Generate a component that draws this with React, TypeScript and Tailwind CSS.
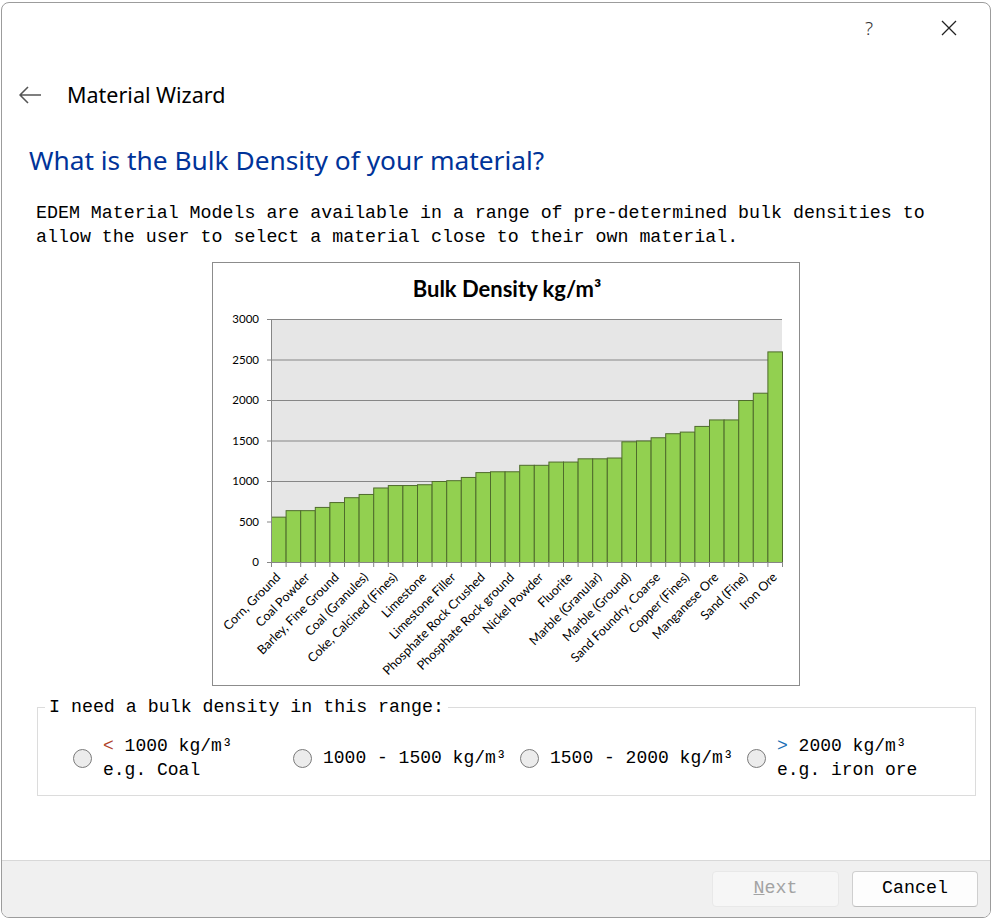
import React from "react";

const bars = [560, 640, 640, 680, 740, 800, 840, 920, 950, 950, 960, 1000, 1010, 1050, 1110, 1120, 1120, 1200, 1200, 1240, 1240, 1280, 1280, 1290, 1490, 1500, 1540, 1590, 1610, 1680, 1760, 1760, 2000, 2090, 2600];

const labels = [
  "Corn, Ground",
  "Coal Powder",
  "Barley, Fine Ground",
  "Coal (Granules)",
  "Coke, Calcined (Fines)",
  "Limestone",
  "Limestone Filler",
  "Phosphate Rock Crushed",
  "Phosphate Rock ground",
  "Nickel Powder",
  "Fluorite",
  "Marble (Granular)",
  "Marble (Ground)",
  "Sand Foundry, Coarse",
  "Copper (Fines)",
  "Manganese Ore",
  "Sand (Fine)",
  "Iron Ore",
];

const mono = { fontFamily: '"Liberation Mono", "DejaVu Sans Mono", monospace' };

function DensityChart() {
  const x0 = 58;
  const y0 = 299;
  const plotW = 511;
  const scale = 243 / 3000;
  const bw = plotW / bars.length;
  const ticks = [0, 500, 1000, 1500, 2000, 2500, 3000];

  return (
    <svg width={586} height={422} viewBox="0 0 586 422" className="block" style={{ fontFamily: 'Lato, "Open Sans", sans-serif' }}>
      <text x={294} y={34} textAnchor="middle" fontSize={22} fontWeight={700} fill="#000">
        Bulk Density kg/m³
      </text>
      <rect x={x0} y={56} width={plotW} height={243} fill="#e6e6e6" />
      {ticks.map((t) => {
        const y = y0 - t * scale;
        return (
          <g key={t}>
            <line x1={x0 - 4} x2={x0 + plotW} y1={y + 0.5} y2={y + 0.5} stroke="#868686" strokeWidth={1} />
            <text x={46} y={y + 4} textAnchor="end" fontSize={11.5} fill="#000">
              {t}
            </text>
          </g>
        );
      })}
      {bars.map((v, i) => (
        <rect
          key={i}
          x={x0 + i * bw + 0.5}
          y={y0 - v * scale + 0.5}
          width={bw}
          height={v * scale}
          fill="#92d050"
          stroke="#4f6b2c"
          strokeWidth={1}
        />
      ))}
      <line x1={x0 + 0.5} x2={x0 + 0.5} y1={56} y2={y0 + 1} stroke="#868686" />
      <line x1={x0} x2={x0 + plotW + 1} y1={y0 + 0.5} y2={y0 + 0.5} stroke="#868686" />
      {Array.from({ length: bars.length + 1 }).map((_, i) => (
        <line key={i} x1={x0 + i * bw + 0.5} x2={x0 + i * bw + 0.5} y1={y0} y2={y0 + 5} stroke="#868686" />
      ))}
      {labels.map((l, k) => {
        const cx = x0 + (k * 2 + 0.5) * bw;
        const ax = cx + 3;
        const ay = 315;
        return (
          <text key={l} x={ax} y={ay} textAnchor="end" fontSize={12.6} fill="#000" transform={`rotate(-45 ${ax} ${ay})`}>
            {l}
          </text>
        );
      })}
    </svg>
  );
}

function Radio({ children }: { children: React.ReactNode }) {
  return (
    <div className="flex items-center">
      <span className="block w-[19px] h-[19px] rounded-full border border-[#7a7a7a] bg-[#ececec] shrink-0" />
      <div className="ml-[11px] text-[18px] leading-[24px] text-black whitespace-pre" style={mono}>
        {children}
      </div>
    </div>
  );
}

export default function App() {
  return (
    <div className="w-[993px] h-[921px] bg-white overflow-hidden pt-[2px] pl-[1px]">
      <div className="w-[990px] h-[916px] border border-[#9c9c9c] rounded-[8px] overflow-hidden bg-white flex flex-col">
        {/* title bar */}
        <div className="h-[50px] flex items-center justify-end shrink-0">
          <span className="text-[19px] text-[#333] mr-[68px] font-light" style={{ fontFamily: '"Noto Sans", sans-serif' }}>
            ?
          </span>
          <svg width="16" height="16" viewBox="0 0 16 16" className="mr-[33px]">
            <path d="M1 1 L15 15 M15 1 L1 15" stroke="#222" strokeWidth="1.3" fill="none" />
          </svg>
        </div>

        <div className="h-[40px] mt-[22px] flex items-center shrink-0">
          <svg width="24" height="20" viewBox="0 0 24 20" className="ml-[16px]">
            <path d="M23 10 H2 M10 2 L2 10 L10 18" stroke="#555" strokeWidth="1.6" fill="none" strokeLinejoin="round" />
          </svg>
          <span className="ml-[25px] text-[21.5px] text-black" style={{ fontFamily: '"Noto Sans", sans-serif' }}>
            Material Wizard
          </span>
        </div>

        <h1
          className="mt-[29px] ml-[27px] text-[26.3px] leading-[32px] text-[#003399] shrink-0"
          style={{ fontFamily: '"Noto Sans", sans-serif' }}
        >
          What is the Bulk Density of your material?
        </h1>

        <p className="mt-[25px] ml-[34px] text-[18.3px] leading-[24px] text-black shrink-0" style={mono}>
          EDEM Material Models are available in a range of pre-determined bulk densities to
          <br />
          allow the user to select a material close to their own material.
        </p>

        <div className="mt-[13px] ml-[210px] w-[588px] h-[424px] border border-[#8c8c8c] bg-white shrink-0">
          <DensityChart />
        </div>

        <fieldset className="mt-[9px] ml-[35px] w-[939px] border border-[#dcdcdc] px-[7px] pb-[13px] shrink-0">
          <legend className="px-[4px] text-[18.3px] leading-[24px] text-black" style={mono}>
            I need a bulk density in this range:
          </legend>
          <div className="mt-[15px] pl-[28px] h-[48px] flex items-center">
            <div className="w-[220px]">
              <Radio>
                <span className="text-[#b0442a]">&lt;</span> 1000 kg/m³
                {"\n"}e.g. Coal
              </Radio>
            </div>
            <div className="w-[227px]">
              <Radio>1000 - 1500 kg/m³</Radio>
            </div>
            <div className="w-[227px]">
              <Radio>1500 - 2000 kg/m³</Radio>
            </div>
            <div>
              <Radio>
                <span className="text-[#1a6fb5]">&gt;</span> 2000 kg/m³
                {"\n"}e.g. iron ore
              </Radio>
            </div>
          </div>
        </fieldset>

        <div className="flex-1" />

        <div className="h-[57px] shrink-0 border-t border-[#d8d8d8] bg-[#f0f0f0] flex items-start justify-end pt-[10px] pr-[12px] gap-[13px]">
          <button
            className="w-[127px] h-[36px] rounded-[4px] border border-[#e8e8e8] bg-[#f6f6f6] text-[18.3px] text-[#a3a3a3]"
            style={mono}
            disabled
          >
            <span className="underline">N</span>ext
          </button>
          <button
            className="w-[126px] h-[36px] rounded-[4px] border border-[#cfcfcf] border-b-[#bdbdbd] bg-[#fdfdfd] text-[18.3px] text-black"
            style={mono}
          >
            Cancel
          </button>
        </div>
      </div>
    </div>
  );
}
